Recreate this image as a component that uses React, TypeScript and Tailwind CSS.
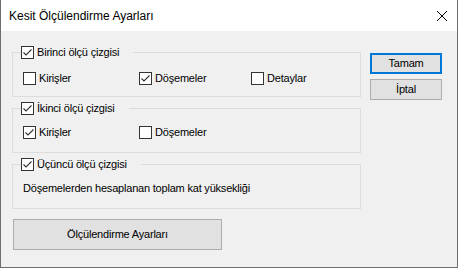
import React from "react";

type BoxProps = { checked?: boolean; label: string };

const CheckBox = ({ checked = false, label }: BoxProps) => (
  <div className="flex items-center h-[13px]">
    <span className="w-[13px] h-[13px] border border-[#333333] bg-white flex items-center justify-center shrink-0">
      {checked && (
        <svg width="11" height="11" viewBox="0 0 11 11" fill="none">
          <path d="M1.5 5.5 L4 8 L9.5 2.5" stroke="#333333" strokeWidth="1.1" />
        </svg>
      )}
    </span>
    <span className="ml-[3px] leading-[13px] whitespace-nowrap">{label}</span>
  </div>
);

const Group = ({
  checked,
  label,
  pt,
  children,
}: {
  checked: boolean;
  label: string;
  pt: string;
  children: React.ReactNode;
}) => (
  <fieldset className="w-[349px] border border-[#dcdcdc]">
    <legend className="ml-[8px] pr-[14px]">
      <CheckBox checked={checked} label={label} />
    </legend>
    <div className={`h-[37px] pl-[10px] ${pt}`}>{children}</div>
  </fieldset>
);

export default function App() {
  return (
    <div className="w-[458px] h-[268px] flex flex-col bg-[#f0f0f0] border-x border-b border-[#6e6e6e] text-[11px] tracking-[-0.2px] text-black font-['Liberation_Sans',Arial,sans-serif]">
      <div className="h-[31px] shrink-0 bg-white flex items-center justify-between pl-[8px] pr-[10px]">
        <span className="text-[12px] tracking-normal leading-none">Kesit Ölçülendirme Ayarları</span>
        <svg width="10" height="10" viewBox="0 0 10 10">
          <path d="M0 0 L10 10 M10 0 L0 10" stroke="#000" strokeWidth="1" />
        </svg>
      </div>

      <div className="flex flex-1">
        <div className="pl-[11px] pt-[15px] flex flex-col">
          <Group checked label="Birinci ölçü çizgisi" pt="pt-[13px]">
            <div className="grid grid-cols-[116px_112px_1fr]">
              <CheckBox label="Kirişler" />
              <CheckBox checked label="Döşemeler" />
              <CheckBox label="Detaylar" />
            </div>
          </Group>

          <div className="mt-[5px]">
            <Group checked label="İkinci ölçü çizgisi" pt="pt-[11px]">
              <div className="grid grid-cols-[116px_112px_1fr]">
                <CheckBox checked label="Kirişler" />
                <CheckBox label="Döşemeler" />
              </div>
            </Group>
          </div>

          <div className="mt-[5px]">
            <Group checked label="Üçüncü ölçü çizgisi" pt="pt-[11px]">
              <div className="leading-[13px]">Döşemelerden hesaplanan toplam kat yüksekliği</div>
            </Group>
          </div>

          <button className="mt-[10px] ml-[1px] w-[209px] h-[31px] bg-[#e1e1e1] border border-[#adadad] text-center">
            Ölçülendirme Ayarları
          </button>
        </div>

        <div className="pl-[9px] pt-[22px] flex flex-col gap-[5px]">
          <button className="w-[72px] h-[21px] bg-[#e1e1e1] border-2 border-[#0078d7] flex items-center justify-center">
            Tamam
          </button>
          <button className="w-[72px] h-[21px] bg-[#e1e1e1] border border-[#adadad] flex items-center justify-center">
            İptal
          </button>
        </div>
      </div>
    </div>
  );
}
